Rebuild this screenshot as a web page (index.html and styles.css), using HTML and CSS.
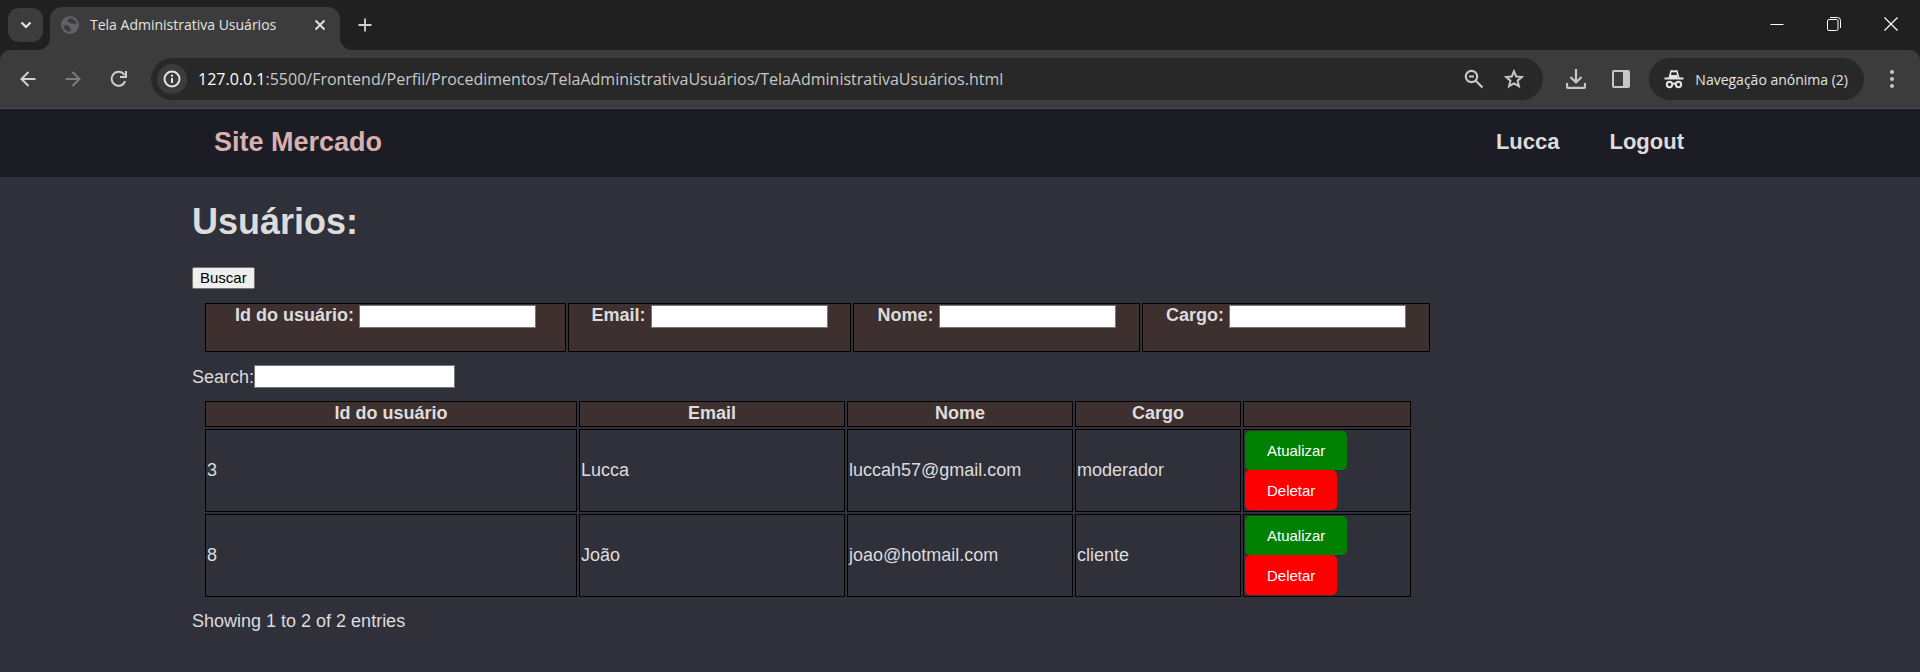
FILE: index.html
```html
<!DOCTYPE html>
<html lang="pt">
<head>
<meta charset="utf-8">
<title>Tela Administrativa Usuários</title>
<link rel="stylesheet" href="styles.css">
</head>
<body>
<div class="browser">
  <div class="tabstrip">
    <button class="tab-search" aria-label="Pesquisar separadores"><svg width="12" height="8" viewBox="0 0 12 8"><path d="M1.5 1.5 6 6l4.500-4.500" fill="none" stroke="#e3e3e3" stroke-width="2.200"/></svg></button>
    <div class="tab">
      <svg width="18" height="18" viewBox="0 0 18 18"><circle cx="9" cy="9" r="9" fill="#5f6368"/><path d="M2.300 9.200h4.200c1.800 0 2.300 1.500 1.600 2.600h1.500v3.800A6.700 6.700 0 0 1 2.300 9.200zM8.300 2.400A6.700 6.700 0 0 1 15.600 8c-1.300.5-2.600.2-3.200-.6h-2.200c-.9 0-1.500-.6-1.500-1.500H6.300c0-1.600.8-2.800 2-3.500z" fill="#3c3c3c"/></svg>
      <span class="tab-title">Tela Administrativa Usuários</span>
      <button class="plain" aria-label="Fechar separador"><svg width="12" height="12" viewBox="0 0 12 12"><path d="M1.500 1.500l9 9m0-9-9 9" stroke="#e3e3e3" stroke-width="1.800"/></svg></button>
    </div>
    <button class="plain new-tab" aria-label="Novo separador"><svg width="14" height="14" viewBox="0 0 14 14"><path d="M7 .5v13M.5 7h13" stroke="#d0d0d0" stroke-width="1.800"/></svg></button>
    <div class="window-controls">
      <button class="plain" aria-label="Minimizar"><svg width="14" height="14" viewBox="0 0 14 14"><path d="M.5 7.500h13" stroke="#fff"/></svg></button>
      <button class="plain" aria-label="Restaurar"><svg width="14" height="14" viewBox="0 0 14 14" fill="none" stroke="#fff"><rect x=".5" y="2.500" width="10.500" height="11" rx="1.500"/><path d="M3 .5h7.500a3 3 0 0 1 3 3V11"/></svg></button>
      <button class="plain" aria-label="Fechar"><svg width="14" height="14" viewBox="0 0 14 14"><path d="M.5.500l13 13m0-13-13 13" stroke="#fff" stroke-width="1.200"/></svg></button>
    </div>
  </div>
  <div class="toolbar-back">
  <div class="toolbar">
    <button class="plain" aria-label="Anterior"><svg width="16" height="16" viewBox="0 0 16 16" fill="none" stroke="#d0d0d0" stroke-width="2"><path d="M15.500 8H2M8.500 1 1.500 8l7 7"/></svg></button>
    <button class="plain" aria-label="Seguinte"><svg width="16" height="16" viewBox="0 0 16 16" fill="none" stroke="#7d7d7d" stroke-width="2"><path d="M.5 8H14M7.500 1l7 7-7 7"/></svg></button>
    <button class="plain" aria-label="Recarregar"><svg width="18" height="18" viewBox="0 0 18 18" fill="none" stroke="#d0d0d0" stroke-width="2"><path d="M15.200 11.200A7 7 0 1 1 14.500 5M16 1v6h-6"/></svg></button>
    <div class="omnibox">
      <button class="site-info" aria-label="Informações do site"><svg width="18" height="18" viewBox="0 0 18 18"><circle cx="9" cy="9" r="7.500" fill="none" stroke="#e3e3e3" stroke-width="2"/><path d="M9 8v5M9 4.800v2" stroke="#e3e3e3" stroke-width="2"/></svg></button>
      <span class="url"><b>127.0.0.1</b>:5500/Frontend/Perfil/Procedimentos/TelaAdministrativaUsuários/TelaAdministrativaUsuários.html</span>
      <button class="plain" aria-label="Zoom"><svg width="20" height="20" viewBox="0 0 20 20" fill="none" stroke="#c7c7c7" stroke-width="2.200"><circle cx="7.500" cy="7.500" r="5.700"/><path d="M11.500 11.500l7 7M5 7.500h5"/></svg></button>
      <button class="plain" aria-label="Marcador"><svg width="20" height="20" viewBox="0 0 20 20"><path d="M10 2.300l2.200 5.200 5.600.5-4.200 3.700 1.300 5.500-4.900-2.900-4.900 2.900 1.300-5.500L2.200 8l5.600-.5z" fill="none" stroke="#c7c7c7" stroke-width="2"/></svg></button>
    </div>
    <button class="plain" aria-label="Transferências"><svg width="20" height="20" viewBox="0 0 20 20" fill="none" stroke="#c7c7c7" stroke-width="2.200"><path d="M10 0v13M4.500 8l5.500 5.500L15.500 8M1 14v3.500q0 1.300 1.300 1.300h15.400q1.300 0 1.300-1.300V14"/></svg></button>
    <button class="plain" aria-label="Painel lateral"><svg width="18" height="18" viewBox="0 0 18 18"><rect x="1" y="1" width="16" height="16" rx="1" fill="none" stroke="#c7c7c7" stroke-width="2"/><path d="M11 1h6v16h-6z" fill="#c7c7c7"/></svg></button>
    <button class="incognito"><svg width="20" height="20" viewBox="0 0 20 20"><path d="M.5 8.500h19v2H.5zM4.500 8.500 6.300 2Q6.600.8 7.800 1l2.200.5 2.200-.5q1.200-.2 1.500 1l1.800 6.500h-2L12.300 3 10 3.600 7.700 3 7 6h6v2.500z" fill="#e3e3e3"/><g fill="none" stroke="#e3e3e3" stroke-width="2"><circle cx="5.500" cy="15.500" r="2.700"/><circle cx="14.500" cy="15.500" r="2.700"/><path d="M8 15.200q2-1.200 4 0"/></g></svg>Navegação anónima (2)</button>
    <button class="plain" aria-label="Menu"><svg width="4" height="18" viewBox="0 0 4 18" fill="#c7c7c7"><circle cx="2" cy="2" r="2"/><circle cx="2" cy="9" r="2"/><circle cx="2" cy="16" r="2"/></svg></button>
  </div>
  </div>
</div>
<header class="site-header">
  <a class="brand" href="#">Site Mercado</a>
  <nav class="site-nav"><a href="#">Lucca</a><a href="#">Logout</a></nav>
</header>
<main class="content">
  <h1>Usuários:</h1>
  <button class="search-button">Buscar</button>
  <table class="grid filters">
    <tr>
      <th><label for="f-id">Id do usuário:</label> <input id="f-id" type="text"></th>
      <th><label for="f-email">Email:</label> <input id="f-email" type="text"></th>
      <th><label for="f-nome">Nome:</label> <input id="f-nome" type="text"></th>
      <th><label for="f-cargo">Cargo:</label> <input id="f-cargo" type="text"></th>
    </tr>
  </table>
  <div class="search"><label for="search">Search:</label><input id="search" type="search"></div>
  <table class="grid users">
    <thead>
      <tr><th>Id do usuário</th><th>Email</th><th>Nome</th><th>Cargo</th><th></th></tr>
    </thead>
    <tbody>
      <tr><td>3</td><td>Lucca</td><td>luccah57@gmail.com</td><td>moderador</td><td><div class="actions"><button class="update">Atualizar</button><button class="delete">Deletar</button></div></td></tr>
      <tr><td>8</td><td>João</td><td>joao@hotmail.com</td><td>cliente</td><td><div class="actions"><button class="update">Atualizar</button><button class="delete">Deletar</button></div></td></tr>
    </tbody>
  </table>
  <p class="info">Showing 1 to 2 of 2 entries</p>
</main>
</body>
</html>
```
FILE: styles.css
```css
* { box-sizing: border-box; }
body {
  margin: 0;
  background: #30303a;
  color: #dcdcdc;
  font: 18px/20px "Liberation Sans", Arial, sans-serif;
}
button, input { font-family: inherit; margin: 0; }
svg { display: block; flex: none; }

/* Browser window */
.browser { font-family: "Open Sans", "Noto Sans", sans-serif; background: #202020; }
.plain { border: 0; padding: 0; background: none; }
.tabstrip { display: flex; height: 50px; padding: 7px 6px 0 8px; }
.tab-search {
  display: grid; place-items: center;
  width: 35px; height: 34px; margin: 1px 7px 0 0;
  border: 0; border-radius: 11px; background: #3c3c3c;
}
.tab {
  position: relative;
  display: flex; align-items: center; gap: 11px;
  width: 290px; padding: 0 14px 7px 11px;
  border-radius: 12px 12px 0 0; background: #3c3c3c;
}
.tab::before, .tab::after { content: ""; position: absolute; bottom: 0; width: 12px; height: 12px; }
.tab::before { left: -12px; background: radial-gradient(circle at 0 0, transparent 12px, #3c3c3c 12px); }
.tab::after { right: -12px; background: radial-gradient(circle at 100% 0, transparent 12px, #3c3c3c 12px); }
.tab-title { flex: 1; font-size: 14px; line-height: 20px; color: #e3e3e3; white-space: nowrap; }
.new-tab { align-self: flex-start; margin: 11px 0 0 18px; }
.window-controls { display: flex; align-items: flex-start; margin-left: auto; }
.window-controls .plain { display: grid; place-items: center; width: 57px; height: 34px; }
.window-controls .plain:last-child { width: 46px; margin-left: 6px; }
.toolbar-back { background: #202020; }
.toolbar {
  display: flex; align-items: center;
  height: 59px; border-bottom: 1px solid #4b4b4b; border-radius: 10px 10px 0 0;
  padding: 0 26px 0 20px;
  background: #3c3c3c;
}
.toolbar > .plain { margin-right: 29px; }
.toolbar > .plain:nth-child(3) { margin-right: 23px; }
.toolbar > .plain:nth-child(5) { margin: 0 26px 0 23px; }
.toolbar > .plain:nth-child(6) { margin-right: 19px; }
.toolbar > .plain:last-child { margin: 0 0 0 26px; }
.omnibox {
  flex: 1; display: flex; align-items: center; gap: 20px;
  height: 42px; padding: 0 19px 0 6px;
  border-radius: 21px; background: #282828;
}
.site-info {
  display: grid; place-items: center;
  width: 30px; height: 30px; margin-right: -9px; padding: 0;
  border: 0; border-radius: 50%; background: #3c3c3c;
}
.url { flex: 1; font-size: 16px; line-height: 24px; color: #c7c7c7; white-space: nowrap; }
.url b { font-weight: 400; color: #fff; }
.incognito {
  display: flex; align-items: center; gap: 11px;
  height: 42px; padding: 0 16px 0 15px;
  border: 0; border-radius: 21px; background: #282828;
  color: #e3e3e3; font-size: 14px; white-space: nowrap;
}

/* Site header */
.site-header {
  display: flex; justify-content: space-between; align-items: center;
  height: 68px; padding: 0 10% 2px;
  background: #1c1c24; font-weight: 700;
}
.site-header a { color: #dcdcdc; text-decoration: none; }
.site-header .brand { padding-left: 22px; color: #d8b0b0; font-size: 27px; line-height: 32px; }
.site-nav { display: flex; gap: 50px; padding-right: 44px; font-size: 22px; line-height: 28px; }

/* Page content */
.content { padding: 25px 10%; }
h1 { margin: 0 0 25px; font-size: 36px; line-height: 40px; }
.search-button {
  display: block; height: 22px; padding: 0 7px;
  border: 1px solid #767676; border-radius: 2px;
  background: #efefef; color: #000; font-size: 15px; line-height: 20px;
}
input {
  height: 23px; padding: 1px 2px;
  border: 1px solid #767676; border-radius: 0;
  background: #fff; font-size: 15px; vertical-align: top;
}
.grid { margin: 12px 11px; table-layout: fixed; border-spacing: 2px; }
.grid th, .grid td { padding: 1px; border: 1px solid #000; }
.grid th { background: #3e302f; }
.filters { width: 80%; }
.filters th { height: 49px; vertical-align: top; }
.filters input { width: 177px; }
.filters th:nth-child(1) { width: 361px; }
.filters th:nth-child(2) { width: 283px; }
.filters th:nth-child(3) { width: 287px; }
.search { display: flex; align-items: center; margin: -1px 0; }
.search input { width: 201px; }
.users { width: 78.8%; }
.users th { height: 26px; padding-bottom: 3px; }
.users th:nth-child(1) { width: 372px; }
.users th:nth-child(2) { width: 266px; }
.users th:nth-child(3) { width: 226px; }
.users th:nth-child(4) { width: 166px; }
.users td { padding-bottom: 2px; }
.users td:last-child { padding-bottom: 1px; }
.actions { display: flex; flex-direction: column; align-items: flex-start; }
.actions button {
  height: 39px; padding: 0 22px;
  border: 0; border-radius: 5px; color: #fff; font-size: 15px;
}
.actions .update { background: #008000; }
.actions .delete { height: 40px; background: #f00; }
.info { margin: 0; }
```
